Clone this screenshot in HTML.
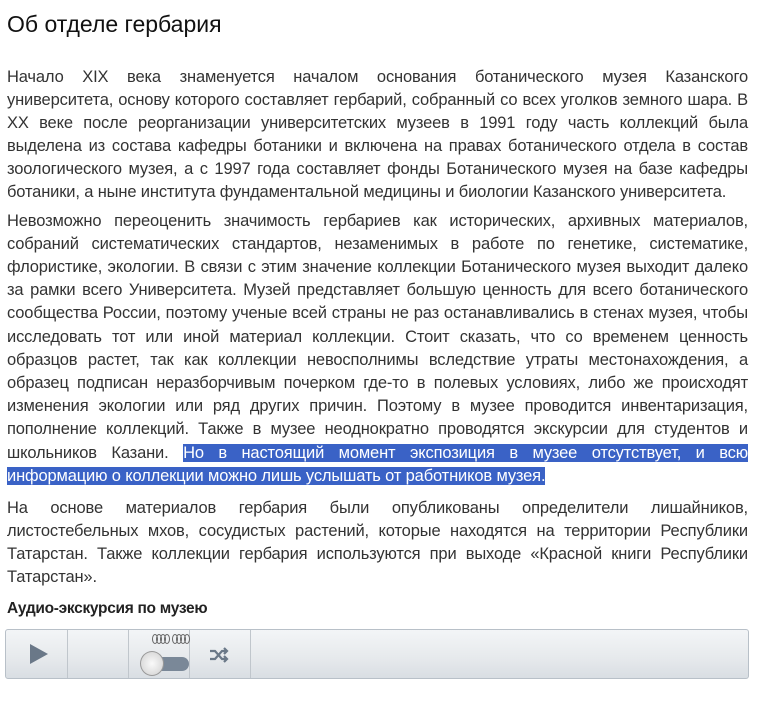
<!DOCTYPE html>
<html><head><meta charset="utf-8"><style>
body{margin:0;width:775px;height:706px;background:#fff;position:relative;overflow:hidden;font-family:"Liberation Sans","DejaVu Sans",sans-serif}
h1{position:absolute;left:7px;top:9px;margin:0;font-weight:normal;font-size:23px;color:#111;line-height:30px}
.l{position:absolute;left:7px;width:741px;white-space:nowrap;text-align:justify;text-align-last:justify;font-size:16.5px;color:#333;line-height:23px;letter-spacing:-0.15px}
.n{text-align-last:left}
.h{background:#3a62c6;color:#fff}
.t{position:absolute;left:7px;top:598px;font-size:15.5px;font-weight:bold;color:#222;line-height:22px;letter-spacing:-0.3px}
.pl{position:absolute;left:5px;top:629px;width:744px;height:50px;border:1px solid #b8c0c8;border-radius:3px;background:linear-gradient(#f3f5f7,#e6e9ec 60%,#d9dee3);box-sizing:border-box}
.sep{position:absolute;top:0;width:1px;height:48px;background:#c0c6cc}
</style></head><body>
<h1>Об отделе гербария</h1>
<div class="l" style="top:66px">Начало XIX века знаменуется началом основания ботанического музея Казанского</div>
<div class="l" style="top:89px">университета, основу которого составляет гербарий, собранный со всех уголков земного шара. В</div>
<div class="l" style="top:112px">XX веке после реорганизации университетских музеев в 1991 году часть коллекций была</div>
<div class="l" style="top:135px">выделена из состава кафедры ботаники и включена на правах ботанического отдела в состав</div>
<div class="l" style="top:158px">зоологического музея, а с 1997 года составляет фонды Ботанического музея на базе кафедры</div>
<div class="l n" style="top:181px">ботаники, а ныне института фундаментальной медицины и биологии Казанского университета.</div>
<div class="l" style="top:210px">Невозможно переоценить значимость гербариев как исторических, архивных материалов,</div>
<div class="l" style="top:233px">собраний систематических стандартов, незаменимых в работе по генетике, систематике,</div>
<div class="l" style="top:256px">флористике, экологии. В связи с этим значение коллекции Ботанического музея выходит далеко</div>
<div class="l" style="top:279px">за рамки всего Университета. Музей представляет большую ценность для всего ботанического</div>
<div class="l" style="top:302px">сообщества России, поэтому ученые всей страны не раз останавливались в стенах музея, чтобы</div>
<div class="l" style="top:326px">исследовать тот или иной материал коллекции. Стоит сказать, что со временем ценность</div>
<div class="l" style="top:349px">образцов растет, так как коллекции невосполнимы вследствие утраты местонахождения, а</div>
<div class="l" style="top:372px">образец подписан неразборчивым почерком где-то в полевых условиях, либо же происходят</div>
<div class="l" style="top:395px">изменения экологии или ряд других причин. Поэтому в музее проводится инвентаризация,</div>
<div class="l" style="top:418px">пополнение коллекций. Также в музее неоднократно проводятся экскурсии для студентов и</div>
<div class="l" style="top:442px">школьников Казани. <span class="h">Но в настоящий момент экспозиция в музее отсутствует, и всю</span></div>
<div class="l n" style="top:465px"><span class="h">информацию о коллекции можно лишь услышать от работников музея.</span></div>
<div class="l" style="top:497px">На основе материалов гербария были опубликованы определители лишайников,</div>
<div class="l" style="top:520px">листостебельных мхов, сосудистых растений, которые находятся на территории Республики</div>
<div class="l" style="top:543px">Татарстан. Также коллекции гербария используются при выходе «Красной книги Республики</div>
<div class="l n" style="top:566px">Татарстан».</div>
<div class="t">Аудио-экскурсия по музею</div>
<div class="pl">
<div class="sep" style="left:61px"></div><div class="sep" style="left:122px"></div><div class="sep" style="left:183px"></div><div class="sep" style="left:244px"></div>
<svg style="position:absolute;left:23px;top:13px" width="20" height="22"><path d="M1 1 L19 11 L1 21Z" fill="#6a7888"/></svg>
<svg style="position:absolute;left:146px;top:4px" width="38" height="10"><g fill="none" stroke="#666" stroke-width="1"><ellipse cx="3" cy="5" rx="2.5" ry="4.5"/><ellipse cx="7" cy="5" rx="2.5" ry="4.5"/><ellipse cx="11" cy="5" rx="2.5" ry="4.5"/><ellipse cx="15" cy="5" rx="2.5" ry="4.5"/><ellipse cx="23" cy="5" rx="2.5" ry="4.5"/><ellipse cx="27" cy="5" rx="2.5" ry="4.5"/><ellipse cx="31" cy="5" rx="2.5" ry="4.5"/><ellipse cx="35" cy="5" rx="2.5" ry="4.5"/></g></svg>
<div style="position:absolute;left:140px;top:27px;width:43px;height:14px;border-radius:7px;background:#7a8898"></div>
<div style="position:absolute;left:134px;top:21px;width:24px;height:25px;border-radius:50%;background:radial-gradient(#fafafa,#cfcfcf);border:1px solid #999;box-sizing:border-box"></div>
<svg style="position:absolute;left:203px;top:17px" width="20" height="16"><path d="M1 4h5l7 8h5M1 12h5l7-8h5M15 1l3 3-3 3M15 9l3 3-3 3" stroke="#6a7888" stroke-width="2.2" fill="none"/></svg>
</div>
</body></html>
